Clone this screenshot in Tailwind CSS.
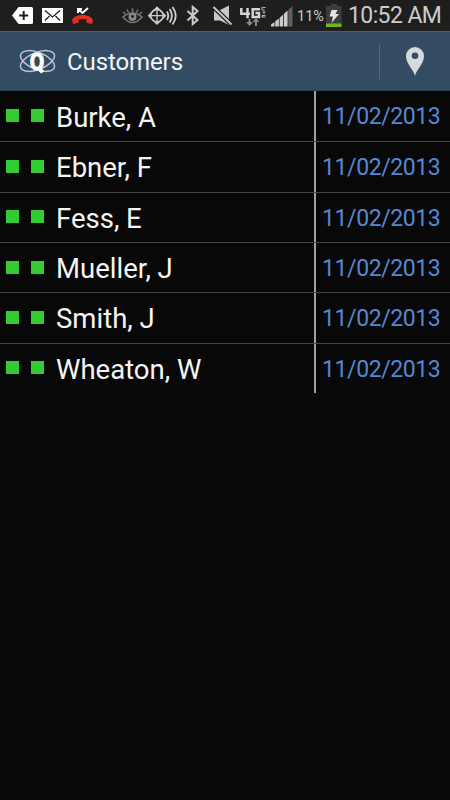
<!DOCTYPE html>
<html lang="en">
  <head>
    <meta charset="UTF-8" />
    <meta name="viewport" content="width=device-width, initial-scale=1.0" />
    <script src="https://cdn.jsdelivr.net/npm/@tailwindcss/browser@4"></script>
    <title>Customers</title>
  </head>
  <body class="bg-[#080808] flex flex-col h-screen overflow-hidden text-[#f5f5f5] font-['Roboto',sans-serif]">
    <!-- Status bar -->
    <div class="flex h-[31px] shrink-0 items-center bg-[#1e1e1e] text-[#cccccc]">
      <svg class="ml-3 shrink-0" width="22" height="31" viewBox="12 0 22 31">
        <path d="M12 15.5L18.5 7H31.5Q33 7 33 8.5V22.5Q33 24 31.5 24H18.5Z" fill="#fff" />
        <path d="M23.7 11V20M19.2 15.5H28.2" stroke="#1e1e1e" stroke-width="2" />
      </svg>
      <svg class="ml-2 shrink-0" width="22" height="31" viewBox="42 0 22 31">
        <path d="M42 8H63V23H42Z" fill="#fff" />
        <path d="M45 10.5L52.5 17L60 10.5M45 20.5L49.5 16M60 20.5L55.5 16" fill="none" stroke="#1e1e1e" stroke-width="1.3" />
      </svg>
      <svg class="ml-2 shrink-0" width="22" height="31" viewBox="72 0 22 31">
        <path d="M72.3 21.5C71.5 18 76 15 82.5 15S93.5 18 92.7 21.5L92 24L86.5 22.7V19.6Q82.5 18.4 78.5 19.6V22.7L73 24Z" fill="#e0301e" />
        <path d="M78 13V9H82M78.5 9.3L82.5 13L88 8" fill="none" stroke="#fff" stroke-width="2" />
      </svg>
      <svg class="ml-7 shrink-0" width="22" height="31" viewBox="122 0 22 31">
        <g fill="none" stroke="#777" stroke-width="1.6">
          <path d="M123 17Q132.5 9 142 17Q132.5 28 123 17Z" />
          <path d="M132.5 8.5V12M127 9.5L128.5 12.5M138 9.5L136.5 12.5M123 12L125.5 14M142 12L139.5 14" />
        </g>
        <circle cx="132.5" cy="17" r="4" fill="#8a8a8a" />
        <circle cx="132.5" cy="16.5" r="1.4" fill="#1e1e1e" />
      </svg>
      <svg class="ml-1 shrink-0" width="30" height="31" viewBox="148 0 30 31">
        <g fill="none" stroke="#ccc" stroke-width="1.5">
          <circle cx="157" cy="15.7" r="6.2" />
          <path d="M148.5 15.7L157 7.2L165.5 15.7L157 24.2ZM148.5 15.7H165.5M157 7.2V24.2" stroke-width="1.3" />
          <path d="M167 11.5Q169.5 15.7 167 20M169.7 9Q174 15.7 169.7 22.5M172.5 7Q179 15.7 172.5 24.5" stroke-width="1.9" />
        </g>
      </svg>
      <svg class="ml-2 shrink-0" width="14" height="31" viewBox="186 0 14 31">
        <path d="M187.5 11L197.5 20L192.7 24V7L197.5 11L187.5 20.5" fill="none" stroke="#ccc" stroke-width="2" />
      </svg>
      <svg class="ml-3 shrink-0" width="22" height="31" viewBox="212 0 22 31">
        <path d="M214 10.5H219L229 5.5V25L220 20.5H214Z" fill="#c8c8c8" />
        <path d="M213.5 7L232 25" stroke="#1e1e1e" stroke-width="4.5" />
        <path d="M213.5 7L231.5 24.5" stroke="#c8c8c8" stroke-width="1.9" />
      </svg>
      <svg class="ml-1.5 shrink-0" width="26" height="31" viewBox="240 0 26 31">
        <g fill="none" stroke="#d4d4d4" stroke-width="2.5">
          <path d="M241.3 8V13.8H250M247.5 8V18.3" />
          <path d="M260 9.2H252.7V17H259V13H255.5" />
        </g>
        <path d="M262 7V10H264.5M265.5 7.5H262.5M262.5 12H265.5M264 12V14M265.5 15.5H262V17H265.5" fill="none" stroke="#bbb" stroke-width="1" />
        <path d="M249.5 19V23M256 26V21" stroke="#888" stroke-width="2" />
        <path d="M246 22H253L249.5 26ZM252.5 22L256 18L259.5 22Z" fill="#888" />
      </svg>
      <svg class="ml-1 shrink-0" width="24" height="31" viewBox="270 0 24 31">
        <path d="M271 24.5L274.5 22V26.5H271ZM275.3 21.3L278.8 18.5V26.5H275.3ZM279.6 17.8L283.2 14.5V26.5H279.6ZM284 13.7L287.6 10.5V26.5H284Z" fill="#ccc" />
        <path d="M288.3 9.7L292.5 6V26.500H288.3Z" fill="#606060" />
      </svg>
      <span class="ml-[3px] w-[27px] shrink-0 whitespace-nowrap pt-[2px] text-[14.5px]">11%</span>
      <svg class="ml-[2px] shrink-0" width="16" height="31" viewBox="326 0 16 31">
        <path d="M331 4H337V6H341.5V27H326V6H331Z" fill="#3c3c3c" />
        <path d="M326 23.5H341.5V27H326Z" fill="#74b510" />
        <path d="M331.5 10H337.5L335.5 14H339L331.5 23L333 16.5H329.5Z" fill="#e4e4e4" />
      </svg>
      <span class="ml-[6px] shrink-0 whitespace-nowrap pt-[2px] text-[23px] tracking-[-0.6px]">10:52 AM</span>
    </div>

    <!-- Action bar -->
    <div class="flex h-[60px] shrink-0 items-center border-t border-b border-t-[#48627c] border-b-[#263d54] bg-[#344c63]">
      <svg class="ml-[19px] shrink-0" width="38" height="38" viewBox="19 42 38 38">
        <g fill="none" stroke="#b9c7d2" stroke-width="1.5">
          <ellipse cx="37.5" cy="61" rx="18" ry="8.5" transform="rotate(22 37.5 61)" />
          <ellipse cx="37.5" cy="61" rx="18" ry="8.5" transform="rotate(-22 37.5 61)" />
        </g>
        <text x="37" y="69.5" text-anchor="middle" font-family="Roboto" font-weight="700" font-size="24" textLength="14.5" lengthAdjust="spacingAndGlyphs" fill="#fff" stroke="#fff" stroke-width="1">Q</text>
      </svg>
      <h1 class="ml-[10px] flex-1 pt-[2px] text-[24px] tracking-[-0.1px]">Customers</h1>
      <div class="h-[35px] w-px bg-[#53697d]"></div>
      <button class="flex w-[70px] justify-center">
        <svg width="20" height="30" viewBox="405 46 20 30">
          <path fill-rule="evenodd" d="M415 76C414 70 406 64 406 56A9 9 0 0 1 424 56C424 64 416 70 415 76ZM415 52.5A3.3 3.3 0 1 0 415 59.1A3.3 3.3 0 1 0 415 52.5Z" fill="#d5dadd" />
        </svg>
      </button>
    </div>

    <!-- Customer list -->
    <div class="grid h-[302px] shrink-0 grid-rows-6 text-[27.5px]">
      <div class="flex items-center">
        <span class="ml-[6px] mb-px size-[13px] bg-[#33cc33]"></span>
        <span class="ml-3 mb-px size-[13px] bg-[#33cc33]"></span>
        <span class="ml-3 flex-1 pt-[2px] whitespace-nowrap">Burke, A</span>
        <span class="flex h-full w-[136px] items-center border-l-2 border-[#a0a0a0] pl-1.5 pt-[3px] text-[23px] tracking-[-0.4px] text-[#5588d4]">11/02/2013</span>
      </div>
      <div class="flex items-center border-t border-[#444]">
        <span class="ml-[6px] mb-px size-[13px] bg-[#33cc33]"></span>
        <span class="ml-3 mb-px size-[13px] bg-[#33cc33]"></span>
        <span class="ml-3 flex-1 pt-[2px] whitespace-nowrap">Ebner, F</span>
        <span class="flex h-full w-[136px] items-center border-l-2 border-[#a0a0a0] pl-1.5 pt-[3px] text-[23px] tracking-[-0.4px] text-[#5588d4]">11/02/2013</span>
      </div>
      <div class="flex items-center border-t border-[#444]">
        <span class="ml-[6px] mb-px size-[13px] bg-[#33cc33]"></span>
        <span class="ml-3 mb-px size-[13px] bg-[#33cc33]"></span>
        <span class="ml-3 flex-1 pt-[2px] whitespace-nowrap">Fess, E</span>
        <span class="flex h-full w-[136px] items-center border-l-2 border-[#a0a0a0] pl-1.5 pt-[3px] text-[23px] tracking-[-0.4px] text-[#5588d4]">11/02/2013</span>
      </div>
      <div class="flex items-center border-t border-[#444]">
        <span class="ml-[6px] mb-px size-[13px] bg-[#33cc33]"></span>
        <span class="ml-3 mb-px size-[13px] bg-[#33cc33]"></span>
        <span class="ml-3 flex-1 pt-[2px] whitespace-nowrap">Mueller, J</span>
        <span class="flex h-full w-[136px] items-center border-l-2 border-[#a0a0a0] pl-1.5 pt-[3px] text-[23px] tracking-[-0.4px] text-[#5588d4]">11/02/2013</span>
      </div>
      <div class="flex items-center border-t border-[#444]">
        <span class="ml-[6px] mb-px size-[13px] bg-[#33cc33]"></span>
        <span class="ml-3 mb-px size-[13px] bg-[#33cc33]"></span>
        <span class="ml-3 flex-1 pt-[2px] whitespace-nowrap">Smith, J</span>
        <span class="flex h-full w-[136px] items-center border-l-2 border-[#a0a0a0] pl-1.5 pt-[3px] text-[23px] tracking-[-0.4px] text-[#5588d4]">11/02/2013</span>
      </div>
      <div class="flex items-center border-t border-[#444]">
        <span class="ml-[6px] mb-px size-[13px] bg-[#33cc33]"></span>
        <span class="ml-3 mb-px size-[13px] bg-[#33cc33]"></span>
        <span class="ml-3 flex-1 pt-[2px] whitespace-nowrap">Wheaton, W</span>
        <span class="flex h-full w-[136px] items-center border-l-2 border-[#a0a0a0] pl-1.5 pt-[3px] text-[23px] tracking-[-0.4px] text-[#5588d4]">11/02/2013</span>
      </div>
    </div>
  </body>
</html>
